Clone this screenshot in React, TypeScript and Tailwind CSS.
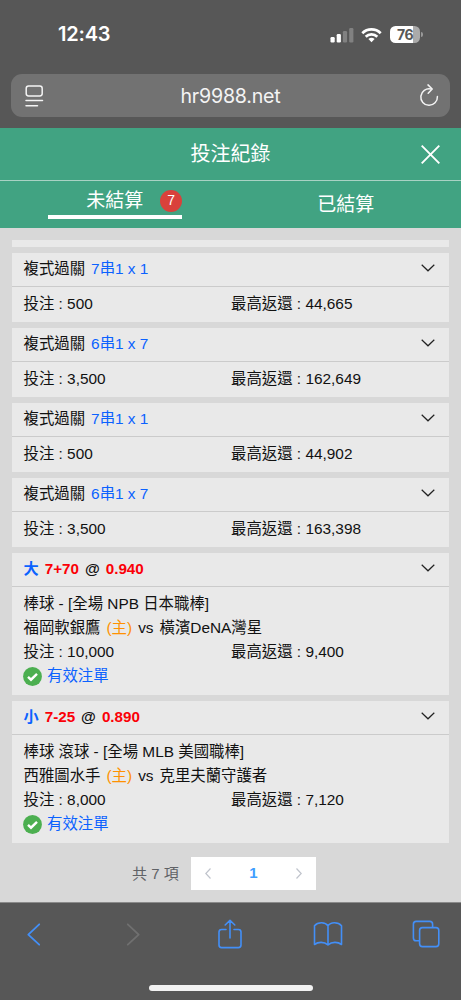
import React, { useState } from "react";
import clsx from "clsx";

type Bet = {
  id: number;
  kind: "combo" | "single";
  pick: string;
  line?: string;
  odds?: string;
  event?: string;
  home?: string;
  away?: string;
  stake: string;
  payout: string;
};

const bets: Bet[] = [
  { id: 1, kind: "combo", pick: "7串1 x 1", stake: "500", payout: "44,665" },
  { id: 2, kind: "combo", pick: "6串1 x 7", stake: "3,500", payout: "162,649" },
  { id: 3, kind: "combo", pick: "7串1 x 1", stake: "500", payout: "44,902" },
  { id: 4, kind: "combo", pick: "6串1 x 7", stake: "3,500", payout: "163,398" },
  {
    id: 5,
    kind: "single",
    pick: "大",
    line: "7+70",
    odds: "0.940",
    event: "棒球 - [全場 NPB 日本職棒]",
    home: "福岡軟銀鷹",
    away: "橫濱DeNA灣星",
    stake: "10,000",
    payout: "9,400",
  },
  {
    id: 6,
    kind: "single",
    pick: "小",
    line: "7-25",
    odds: "0.890",
    event: "棒球 滾球 - [全場 MLB 美國職棒]",
    home: "西雅圖水手",
    away: "克里夫蘭守護者",
    stake: "8,000",
    payout: "7,120",
  },
];

const StatusBar = () => (
  <div className="flex h-[74px] items-start justify-between pl-[58px] pr-[38px] pt-[22px] text-white">
    <span className="font-['Inter'] text-[20px] font-semibold leading-[25px] tracking-[-0.2px]">12:43</span>
    <div className="flex items-center pt-[4px]">
      <svg width="24" height="16" viewBox="0 0 24 16" fill="#fff">
        <rect x="0.5" y="10" width="4.2" height="5.5" rx="1.2" />
        <rect x="6.7" y="7" width="4.2" height="8.5" rx="1.2" />
        <rect x="12.9" y="4" width="4.2" height="11.5" rx="1.2" opacity=".25" />
        <rect x="19.2" y="1" width="4.2" height="14.5" rx="1.2" opacity=".25" />
      </svg>
      <svg className="ml-[7px]" width="21" height="16" viewBox="0 0 21 16" fill="none" stroke="#fff" strokeWidth="2.7">
        <path d="M1.3 6.2a13.2 13.2 0 0 1 18.4 0" />
        <path d="M4.7 9.8a8.3 8.3 0 0 1 11.6 0" />
        <path d="M10.5 15.2 7.4 12.1a4.5 4.5 0 0 1 6.2 0Z" fill="#fff" stroke="none" />
      </svg>
      <div className="ml-[8px] flex h-[17px] w-[30px] items-center justify-center overflow-hidden rounded-[5.5px] bg-[linear-gradient(90deg,#fff_76%,#aaa_76%)]">
        <span className="font-['Inter'] text-[14px] font-bold leading-none tracking-[-0.4px] text-[#575757]">76</span>
      </div>
      <span className="ml-px h-[5px] w-[2px] rounded-r-full bg-[#999]" />
    </div>
  </div>
);

const AddressBar = () => (
  <div className="px-[11px] pb-[11px]">
    <div className="flex h-[43px] items-center justify-between rounded-[11px] bg-[#727272] pl-[14px] pr-[11px] text-[#f4f4f4]">
      <svg width="19" height="22" viewBox="0 0 19 22" fill="none" stroke="currentColor" strokeWidth="1.5" strokeLinecap="round">
        <rect x="1.2" y="1" width="16" height="10" rx="2.4" />
        <path d="M1 15.6h16.5M1 20.7h11.5" />
      </svg>
      <span className="pr-[2px] font-['Inter'] text-[19.6px] leading-6 tracking-[-0.2px]">hr9988.net</span>
      <svg width="20" height="24" viewBox="0 0 20 24" fill="none" stroke="currentColor" strokeWidth="1.5" strokeLinecap="round" strokeLinejoin="round">
        <path d="M11.8 4.9A8.3 8.3 0 1 0 18.4 12.6" />
        <path d="M9 .9 13.2 5 9.2 9.2" />
      </svg>
    </div>
  </div>
);

const Chevron = () => (
  <svg width="14" height="8" viewBox="0 0 14 8" fill="none" stroke="#222" strokeWidth="1.2">
    <path d="M.7.8 7 6.8 13.3.8" />
  </svg>
);

const Amounts = ({ stake, payout }: { stake: string; payout: string }) => (
  <div className="flex leading-6">
    <p className="w-[207.5px]">投注 : {stake}</p>
    <p>最高返還 : {payout}</p>
  </div>
);

const BetCard = ({ bet }: { bet: Bet }) => {
  const single = bet.kind === "single";
  return (
    <article className="bg-[#e9e9e9] text-[15.4px] text-[#111]">
      <div className="flex h-[34px] items-center justify-between border-b border-[#cbcbcb] pl-[11.5px] pr-[14px]">
        {single ? (
          <p className="flex gap-[6px] pb-px text-[15.2px] font-bold leading-6">
            <span className="text-[#0b62ff]">{bet.pick}</span>
            <span className="text-[#fb0007]">{bet.line}</span>
            <span>@</span>
            <span className="text-[#fb0007]">{bet.odds}</span>
          </p>
        ) : (
          <p className="flex gap-[6px] pb-[2px] leading-6">
            <span>複式過關</span>
            <span className="text-[#0b62ff]">{bet.pick}</span>
          </p>
        )}
        <span className="pb-[3px]">
          <Chevron />
        </span>
      </div>
      <div className={clsx("pl-[11.5px] pt-[5px]", single ? "h-[108px]" : "h-[35px]")}>
        {single && (
          <>
            <p className="leading-6">{bet.event}</p>
            <p className="flex gap-[6px] leading-6">
              <span>{bet.home}</span>
              <span className="text-[#ff9100]">(主)</span>
              <span>vs</span>
              <span>{bet.away}</span>
            </p>
          </>
        )}
        <Amounts stake={bet.stake} payout={bet.payout} />
        {single && (
          <div className="flex items-center gap-[5px] leading-6">
            <svg className="-ml-[0.5px]" width="19" height="19" viewBox="0 0 19 19">
              <circle cx="9.5" cy="9.5" r="9.4" fill="#4caf50" />
              <path d="m5 9.8 3 2.9 6-5.9" fill="none" stroke="#fff" strokeWidth="2.4" />
            </svg>
            <span className="text-[#0b62ff]">有效注單</span>
          </div>
        )}
      </div>
    </article>
  );
};

const Pagination = () => (
  <div className="mt-[14px] flex items-center pl-[120px] text-[#606266]">
    <span className="w-[59px] text-[15px] leading-[31px]">共 7 項</span>
    <div className="flex h-[33px] w-[125px] items-center justify-between bg-white px-[14px]">
      <svg width="6" height="11" viewBox="0 0 6 11" fill="none" stroke="#c0c4cc" strokeWidth="1.2">
        <path d="M5.5.5.8 5.5l4.7 5" />
      </svg>
      <span className="text-[15px] font-bold text-[#409eff]">1</span>
      <svg width="6" height="11" viewBox="0 0 6 11" fill="none" stroke="#c0c4cc" strokeWidth="1.2">
        <path d="m.5.5 4.7 5-4.7 5" />
      </svg>
    </div>
  </div>
);

const BottomBar = () => (
  <footer className="flex h-[98px] flex-col items-center justify-between border-t border-[#8a8a8a] bg-[#575757] pb-[9px] pt-[13px]">
    <div className="mr-[2px] grid h-9 w-[490px] grid-cols-5 items-center justify-items-center">
      <svg width="14" height="24" viewBox="0 0 14 24" fill="none" stroke="#438ff7" strokeWidth="1.8" strokeLinecap="round" strokeLinejoin="round">
        <path d="M12.2 2.3 1.3 12.7l10.9 10" />
      </svg>
      <svg className="ml-[3px]" width="14" height="24" viewBox="0 0 14 24" fill="none" stroke="#707070" strokeWidth="1.8" strokeLinecap="round" strokeLinejoin="round">
        <path d="m1.8 2.3 10.9 10.4-10.9 10" />
      </svg>
      <svg className="ml-px" width="26" height="32" viewBox="0 0 26 32" fill="none" stroke="#438ff7" strokeWidth="1.6" strokeLinecap="round" strokeLinejoin="round">
        <path d="M9 11.5H4.6a2.6 2.6 0 0 0-2.6 2.6V27a2.6 2.6 0 0 0 2.6 2.6h16.8A2.6 2.6 0 0 0 24 27V14.1a2.6 2.6 0 0 0-2.6-2.6H17M13 20V2.3M8.2 7 13 2.3 17.8 7" />
      </svg>
      <svg width="30" height="26" viewBox="0 0 30 26" fill="none" stroke="#438ff7" strokeWidth="1.6" strokeLinejoin="round">
        <path d="M15 4.8C12.5.9 5 .6 1.5 4.8V23.5C5 20.8 11 20.5 15 23.8 19 20.5 25 20.8 28.5 23.5V4.8C25 .6 17.5.9 15 4.8ZM15 4.8V23.8" />
      </svg>
      <svg width="28" height="28" viewBox="0 0 28 28" fill="none" stroke="#438ff7" strokeWidth="1.6" strokeLinejoin="round">
        <rect x="7.6" y="7.6" width="19.2" height="19" rx="2.8" />
        <path d="M7.6 20.7H4.2a2.8 2.8 0 0 1-2.8-2.8V4.2a2.8 2.8 0 0 1 2.8-2.8H17.8a2.8 2.8 0 0 1 2.8 2.8V7.6" />
      </svg>
    </div>
    <div className="h-[6px] w-[164px] rounded-full bg-[#f2f2f2]" />
  </footer>
);

const App = () => {
  const [tab, setTab] = useState<"open" | "settled">("open");
  return (
    <main className="h-[1000px] w-[461px] overflow-hidden bg-[#d8d8d8] font-['Liberation_Sans','Noto_Sans_CJK_TC',sans-serif]">
      <header className="h-[128px] bg-[#575757]">
        <StatusBar />
        <AddressBar />
      </header>

      <div className="h-[100px] bg-[#41a382] text-white">
        <div className="grid h-[53px] grid-cols-[1fr_auto_1fr] items-center border-b border-[#a9d2c4]">
          <h1 className="col-start-2 text-[20px] leading-7">投注紀錄</h1>
          <button className="mr-[21px] justify-self-end">
            <svg width="19" height="19" viewBox="0 0 19 19" fill="none" stroke="#fff" strokeWidth="1.9">
              <path d="m.7.7 17.6 17.6M18.3.7.7 18.3" />
            </svg>
          </button>
        </div>
        <div className="grid h-[47px] grid-cols-2 justify-items-center">
          <button
            onClick={() => setTab("open")}
            className={clsx(
              "flex h-[38px] w-[134px] items-center justify-end gap-[17px]",
              tab === "open" && "border-b-4 border-white"
            )}
          >
            <span className="pt-[5px] text-[19px] leading-7">未結算</span>
            <span className="mt-[5px] flex size-[22px] items-center justify-center rounded-full bg-[#d9413b] text-[14px]">7</span>
          </button>
          <button
            onClick={() => setTab("settled")}
            className={clsx("w-[134px] text-[19px] leading-7", tab === "settled" && "border-b-4 border-white")}
          >
            已結算
          </button>
        </div>
      </div>

      <section className="flex h-[674px] flex-col px-3 pt-3">
        <div className="mb-[6px] h-[7px] bg-[#e9e9e9]" />
        <div className="flex flex-col gap-[6px]">
          {bets.map((bet) => (
            <BetCard key={bet.id} bet={bet} />
          ))}
        </div>
        <Pagination />
      </section>

      <BottomBar />
    </main>
  );
};

export default App;
